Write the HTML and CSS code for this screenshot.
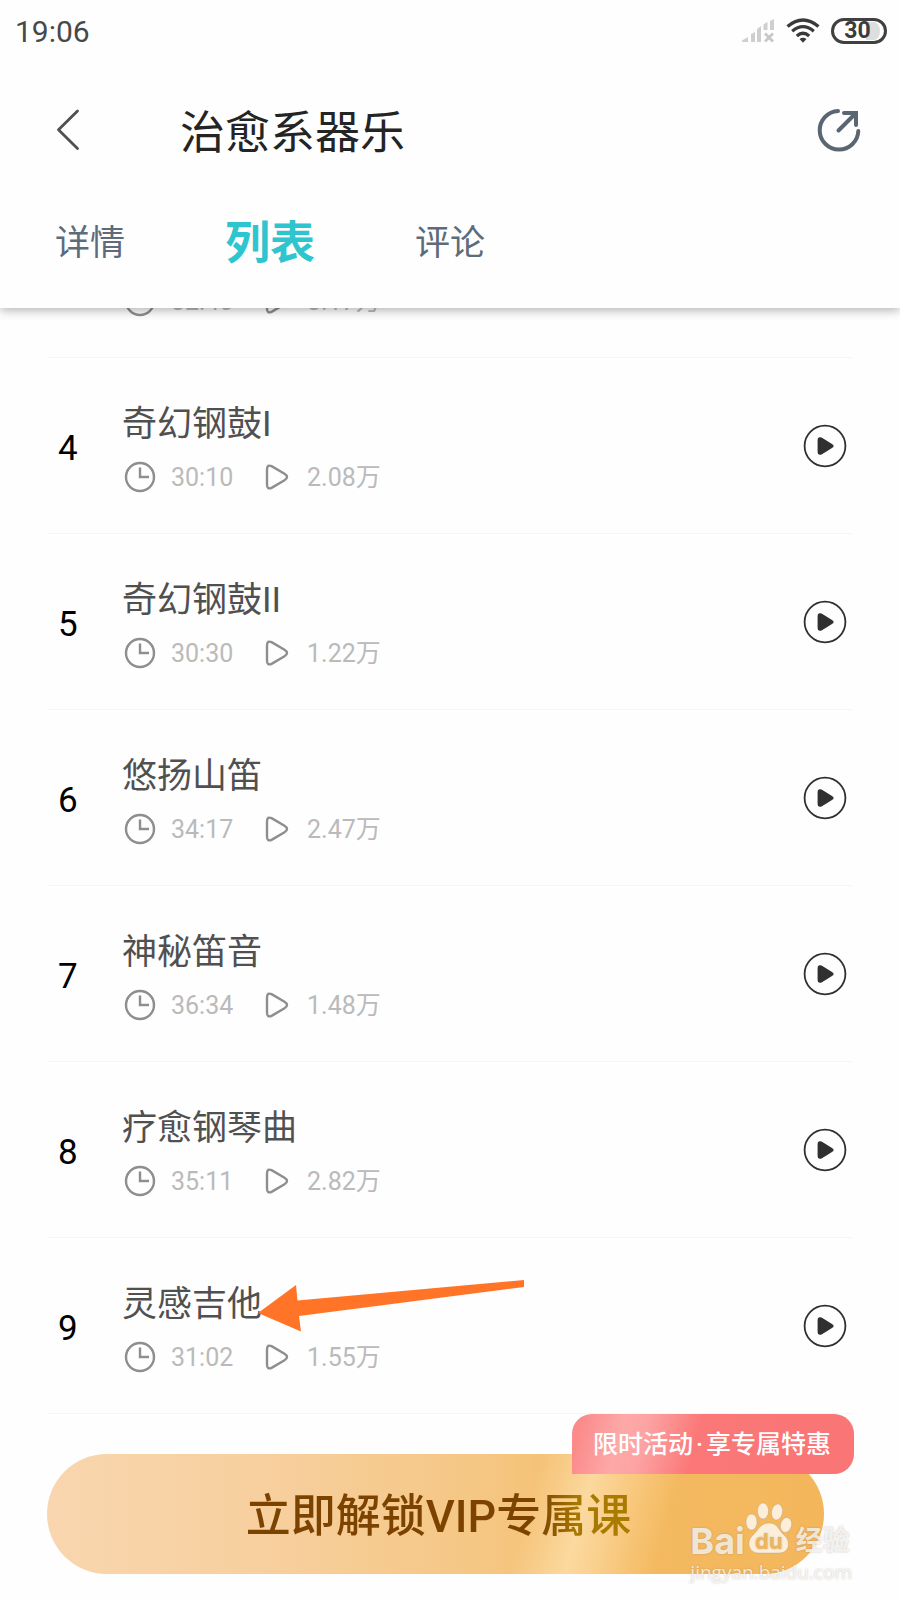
FILE: index.html
```html
<!DOCTYPE html>
<html lang="zh-CN">
<head>
<meta charset="utf-8">
<meta name="viewport" content="width=device-width, initial-scale=1">
<title>治愈系器乐</title>
<link rel="stylesheet" href="styles.css">
</head>
<body>
<svg class="defs" aria-hidden="true">
  <symbol id="clock" viewBox="0 0 32 32">
    <circle cx="16" cy="16" r="14" fill="none" stroke="currentColor" stroke-width="2.400"/>
    <path d="M16 6.500V16H25" fill="none" stroke="currentColor" stroke-width="2.400"/>
  </symbol>
  <symbol id="plays" viewBox="0 0 24 28">
    <path d="M2 6.500Q2 .8 7 3.400L19.500 10.800Q24.600 14 19.500 17.200L7 24.600Q2 27.200 2 21.500Z" fill="none" stroke="currentColor" stroke-width="2.400"/>
  </symbol>
  <symbol id="play" viewBox="0 0 44 44">
    <circle cx="22" cy="22" r="20.400" fill="none" stroke="currentColor" stroke-width="1.800"/>
    <path d="M14.600 16.500Q14.600 12 18.600 13.600L29 20Q32.300 22 29 24L18.600 30.400Q14.600 32 14.600 27.500Z" fill="currentColor"/>
  </symbol>
</svg>
<div class="screen">
  <header class="header">
    <div class="status">
      <time>19:06</time>
      <div class="status-icons">
        <svg width="34" height="26" viewBox="0 0 34 26" aria-label="无信号">
          <path d="M1 24V22.500L7 19V24ZM10 24V16L14 14V24ZM16 24V11L20 8V24ZM22.500 12V6.500L26.500 4V12ZM29 12V3L33 1V12Z" fill="#cfcfcf"/>
          <path d="M24 15.500L32 23.500M32 15.500L24 23.500" stroke="#c8c8c8" stroke-width="2.800"/>
        </svg>
        <svg width="34" height="26" viewBox="0 0 34 26" aria-label="Wi-Fi">
          <path d="M1.500 8.500Q17-4.500 32.500 8.500M6.200 13.200Q17 4 27.800 13.200M10.800 18Q17 12.500 23.200 18" fill="none" stroke="#3a3a3a" stroke-width="3.300"/>
          <path d="M13.500 21Q17 18.600 20.500 21L17 24.800Z" fill="#3a3a3a"/>
        </svg>
        <span class="battery">30</span>
      </div>
    </div>
    <div class="titlebar">
      <button class="icon-button" aria-label="返回">
        <svg width="24" height="42" viewBox="0 0 24 42"><path d="M21.500 2L2.500 20.800L21.500 39.500" fill="none" stroke="#505050" stroke-width="2.800" stroke-linecap="round" stroke-linejoin="round"/></svg>
      </button>
      <h1>治愈系器乐</h1>
      <button class="icon-button" aria-label="分享">
        <svg width="44" height="44" viewBox="0 0 44 44"><path d="M21 3A19.300 19.300 0 1 0 41.300 23" fill="none" stroke="#5b6673" stroke-width="4" stroke-linecap="round"/><path d="M21.500 22.500L38.500 5.500M27 5H39V17" fill="none" stroke="#5b6673" stroke-width="4" stroke-linecap="round"/></svg>
      </button>
    </div>
    <nav class="tabs">
      <a href="#detail">详情</a>
      <a class="active" href="#list" aria-current="page">列表</a>
      <a href="#comments">评论</a>
    </nav>
  </header>

  <main class="tracks">
    <div class="track track-partial">
      <div class="track-info">
        <p class="meta"><svg class="clock"><use href="#clock"/></svg><span class="time">32:40</span><svg class="plays"><use href="#plays"/></svg><span>3.17万</span></p>
      </div>
    </div>
    <div class="track">
      <span class="number">4</span>
      <div class="track-info"><h2>奇幻钢鼓I</h2>
        <p class="meta"><svg class="clock"><use href="#clock"/></svg><span class="time">30:10</span><svg class="plays"><use href="#plays"/></svg><span>2.08万</span></p></div>
      <button class="icon-button" aria-label="播放 奇幻钢鼓I"><svg class="play"><use href="#play"/></svg></button>
    </div>
    <div class="track">
      <span class="number">5</span>
      <div class="track-info"><h2>奇幻钢鼓II</h2>
        <p class="meta"><svg class="clock"><use href="#clock"/></svg><span class="time">30:30</span><svg class="plays"><use href="#plays"/></svg><span>1.22万</span></p></div>
      <button class="icon-button" aria-label="播放 奇幻钢鼓II"><svg class="play"><use href="#play"/></svg></button>
    </div>
    <div class="track">
      <span class="number">6</span>
      <div class="track-info"><h2>悠扬山笛</h2>
        <p class="meta"><svg class="clock"><use href="#clock"/></svg><span class="time">34:17</span><svg class="plays"><use href="#plays"/></svg><span>2.47万</span></p></div>
      <button class="icon-button" aria-label="播放 悠扬山笛"><svg class="play"><use href="#play"/></svg></button>
    </div>
    <div class="track">
      <span class="number">7</span>
      <div class="track-info"><h2>神秘笛音</h2>
        <p class="meta"><svg class="clock"><use href="#clock"/></svg><span class="time">36:34</span><svg class="plays"><use href="#plays"/></svg><span>1.48万</span></p></div>
      <button class="icon-button" aria-label="播放 神秘笛音"><svg class="play"><use href="#play"/></svg></button>
    </div>
    <div class="track">
      <span class="number">8</span>
      <div class="track-info"><h2>疗愈钢琴曲</h2>
        <p class="meta"><svg class="clock"><use href="#clock"/></svg><span class="time">35:11</span><svg class="plays"><use href="#plays"/></svg><span>2.82万</span></p></div>
      <button class="icon-button" aria-label="播放 疗愈钢琴曲"><svg class="play"><use href="#play"/></svg></button>
    </div>
    <div class="track">
      <span class="number">9</span>
      <div class="track-info"><h2>灵感吉他</h2>
        <p class="meta"><svg class="clock"><use href="#clock"/></svg><span class="time">31:02</span><svg class="plays"><use href="#plays"/></svg><span>1.55万</span></p></div>
      <button class="icon-button" aria-label="播放 灵感吉他"><svg class="play"><use href="#play"/></svg></button>
      <svg class="arrow" width="268" height="48" viewBox="0 0 268 48" aria-hidden="true"><path d="M0 28L38 0L39.500 15.500L266 -5V2L41 31L43 46.500Z" fill="#ff7427"/></svg>
    </div>
  </main>

  <footer class="footer">
    <button class="unlock"><span>立即解锁VIP专属课</span></button>
    <span class="badge">限时活动<span class="dot">·</span>享专属特惠</span>
    <div class="watermark">
      <div class="brand">
        <span class="bai">Bai</span>
        <span class="paw">
          <svg width="48" height="52" viewBox="0 0 48 52" aria-hidden="true"><g fill="#fff" fill-opacity=".76" stroke="#a98" stroke-opacity=".35"><ellipse cx="6.500" cy="20" rx="5.500" ry="8"/><ellipse cx="18" cy="9" rx="5.500" ry="8"/><ellipse cx="32" cy="10" rx="5.500" ry="8" transform="rotate(10 32 10)"/><ellipse cx="41" cy="23" rx="5.500" ry="7.500" transform="rotate(15 41 23)"/><path d="M24 21C15 21 13 29 8 33C1 39 3 51 14 51H34C45 51 46 39 39 33C34 29 33 21 24 21Z"/></g></svg>
          <span class="du">du</span>
        </span>
        <span class="jingyan">经验</span>
      </div>
      <div class="site">jingyan.baidu.com</div>
    </div>
  </footer>
</div>
</body>
</html>
```
FILE: styles.css
```css
* { box-sizing: border-box; }
body {
  margin: 0;
  background: #fefefe;
  font-family: Roboto, "Noto Sans CJK SC", sans-serif;
}
h1, h2, p { margin: 0; font-weight: 400; }
.defs { position: absolute; width: 0; height: 0; }
.screen { min-height: 100vh; display: flex; flex-direction: column; overflow: hidden; }
.icon-button { display: flex; padding: 0; border: 0; background: none; color: #303030; }

.header {
  position: relative;
  z-index: 1;
  background: #fefefe;
  box-shadow: 0 2px 10px rgba(0, 0, 0, .32);
}
.status { display: flex; justify-content: space-between; align-items: center; height: 60px; padding: 2px 13px 0 15px; }
.status time { padding-top: 2px; font-size: 30px; line-height: 36px; color: #484848; }
.status-icons { display: flex; align-items: center; gap: 11px; }
.battery {
  width: 56px;
  height: 26px;
  border: 3px solid #404040;
  border-radius: 13px;
  background: linear-gradient(90deg, #fefefe 70%, #dedede 70%) content-box;
  padding: 1px 4px 1px 1px;
  font-size: 23px;
  font-weight: 700;
  line-height: 18px;
  text-align: center;
  color: #3c3c3c;
}
.titlebar { display: flex; align-items: center; height: 140px; padding: 0 39px 0 56px; }
.titlebar h1 { flex: 1; margin-left: 100px; padding-top: 8px; font-size: 45px; line-height: 60px; color: #242424; }
.tabs { display: flex; align-items: center; height: 76px; margin: 6px 0 26px; padding-left: 55px; gap: 100px; }
.tabs a { font-size: 35px; line-height: 60px; color: #5d6b7b; text-decoration: none; }
.tabs .active { font-size: 45px; font-weight: 700; color: #2fc5ce; }

.tracks { padding: 0 48px; }
.track {
  position: relative;
  display: flex;
  align-items: center;
  height: 176px;
  padding: 4px 5px 0 10px;
  border-bottom: 1px solid #f6f6f6;
}
.track-partial { height: 76px; margin-top: -26px; padding: 0 4px 38px 74px; }
.number { width: 64px; padding-top: 2px; font-size: 35px; line-height: 40px; color: #000; }
.track-info { flex: 1; display: flex; flex-direction: column; gap: 8px; }
.track h2 { padding-top: 3px; font-size: 35px; line-height: 48px; color: #505050; }
.meta { display: flex; align-items: center; height: 40px; padding-left: 2px; font-size: 25px; line-height: 36px; color: #bababa; }
.meta span { padding-top: 2px; }
.clock { width: 32px; height: 32px; color: #8e8e8e; }
.plays { width: 24px; height: 28px; margin-right: 18px; color: #8e8e8e; }
.time { width: 94px; margin-left: 15px; }
.play { width: 44px; height: 44px; margin-bottom: 4px; }
.arrow { position: absolute; left: 210px; top: 47px; overflow: visible; }

.footer { position: relative; padding: 40px 76px 27px 47px; }
.unlock {
  display: block;
  width: 100%;
  height: 120px;
  padding: 6px 0 0 6px;
  border: 0;
  border-radius: 60px;
  background:
    linear-gradient(105deg, transparent 61%, rgba(255, 228, 180, .7) 68%, transparent 79%),
    linear-gradient(90deg, #f9d6af 0%, #f7cf9d 30%, #f5c681 58%, #f4ba61 75%, #f3b65b 100%);
  font-family: inherit;
  font-size: 45px;
  font-weight: 500;
  line-height: 60px;
}
.unlock span {
  background: linear-gradient(90deg, #7c4300 76%, #a87800 86%, #a97c00 100%);
  background-clip: text;
  -webkit-background-clip: text;
  color: transparent;
}
.badge {
  position: absolute;
  top: 0;
  right: 46px;
  padding: 13px 23px 11px 21px;
  border-radius: 20px 20px 20px 0;
  background: linear-gradient(105deg, #fb8b8b 4%, #fda9a9 18%, #fda3a3 26%, #fb7878 44%, #fa7575 100%);
  color: #fff;
  font-size: 25px;
  font-weight: 500;
  line-height: 36px;
}
.dot { padding: 0 3px; }
.watermark {
  position: absolute;
  right: 48px;
  bottom: 17px;
  color: rgba(255, 255, 255, .76);
  text-shadow: 0 0 2px rgba(130, 110, 90, .45);
}
.brand { display: flex; align-items: flex-end; height: 54px; margin-bottom: 4px; }
.bai { font-family: Inter, sans-serif; font-size: 36px; font-weight: 700; line-height: 30px; }
.paw { position: relative; height: 54px; }
.du {
  position: absolute;
  inset: 28px 0 0;
  font-family: Inter, sans-serif;
  font-size: 22px;
  font-weight: 700;
  line-height: 22px;
  text-align: center;
  color: #efb45f;
}
.jingyan { margin-left: 3px; font-size: 27px; font-weight: 700; line-height: 30px; }
.site { font-family: "Open Sans", sans-serif; font-size: 19px; line-height: 24px; }
```
